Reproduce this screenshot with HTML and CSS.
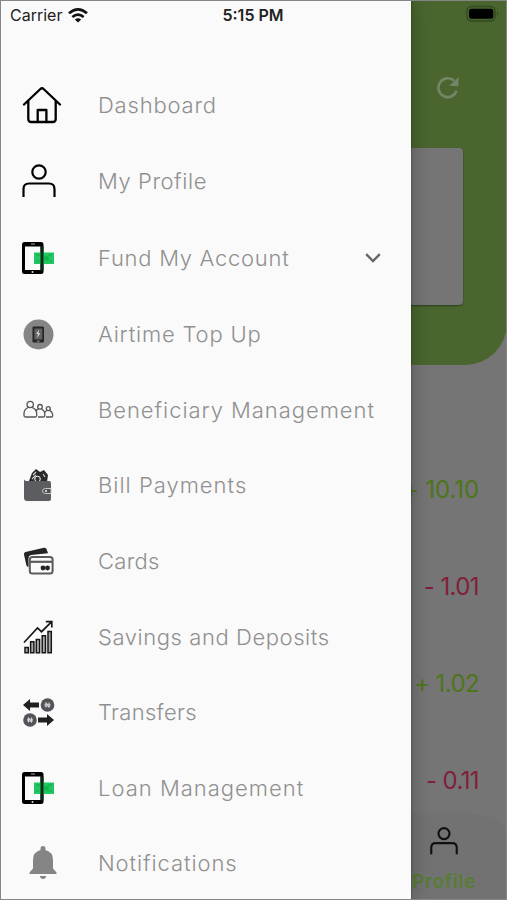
FILE: index.html
```
<!DOCTYPE html>
<html lang="en">
<head>
    <meta charset="UTF-8">
    <meta name="viewport" content="width=device-width, initial-scale=1.0">
    <title>Menu</title>
    <link rel="stylesheet" href="styles.css">
</head>
<body>
    <div class="screen">
        <main class="page">
            <header class="hero">
                <svg class="refresh" viewBox="0 0 24 24"><path d="M21.5 15.5A9.8 9.8 0 1 1 19 5" fill="none" stroke="currentColor" stroke-width="2.8"/><path d="M23.5 1v9.5H14z" fill="currentColor"/></svg>
                <div class="balance-card"></div>
            </header>
            <div class="amounts">
                <div class="amount credit ten">+ 10.10</div>
                <div class="amount debit">- 1.01</div>
                <div class="amount credit">+ 1.02</div>
                <div class="amount debit">- 0.11</div>
            </div>
            <footer class="tabbar">
                <svg width="28" height="28" viewBox="0 0 34 34" fill="none" stroke="#111" stroke-width="2.6"><circle cx="17" cy="8" r="6.7"/><path d="M1.5 33v-8q0-5.5 5.5-5.5h20q5.5 0 5.5 5.5v8"/></svg>
                <span>Profile</span>
            </footer>
        </main>

        <nav class="drawer">
            <a class="item dashboard">
                <svg width="40" height="38" viewBox="0 0 40 38" fill="none" stroke="#000" stroke-width="2.3" stroke-linecap="round" stroke-linejoin="round"><path d="M2 18.5 18.4 3q1.6-1.5 3.2 0L38 18.5M6.3 15v18q0 3 3 3h21.4q3 0 3-3V15"/><path d="M15.7 36V24h8.7v12"/></svg>
                <span>Dashboard</span>
            </a>
            <a class="item profile">
                <svg width="34" height="34" viewBox="0 0 34 34" fill="none" stroke="#000" stroke-width="2.2"><circle cx="17" cy="8" r="6.7"/><path d="M1.5 33v-8q0-5.5 5.5-5.5h20q5.5 0 5.5 5.5v8"/></svg>
                <span>My Profile</span>
            </a>
            <a class="item fund">
                <svg width="34" height="34" viewBox="0 0 34 34"><rect x="0" y="1" width="21.5" height="32" rx="2.5"/><path d="M3 5.5h15.5v23.5H3z" fill="#fafafa"/><path d="M12 11.5h20V23H12z" fill="#20c863"/><path d="M14 14h4m-4 6h3m9-6h4m-3 6h3" stroke="#13a84c"/><circle cx="24.5" cy="17.2" r="2.5" fill="#13b350"/><path d="M18.5 5.5h3v24h-3z" fill="#062b14"/><path d="M9 3h4" stroke="#aaa"/><circle cx="10.5" cy="31" r="1" fill="#ddd"/></svg>
                <span>Fund My Account</span>
                <svg class="chevron" width="16" height="10" viewBox="0 0 16 10"><path d="m1.2 1.2 6.8 6.8 6.8-6.8" fill="none" stroke="#666" stroke-width="2.4"/></svg>
            </a>
            <a class="item airtime">
                <svg width="31" height="31" viewBox="0 0 31 31"><circle cx="15.5" cy="15.5" r="15" fill="#858585"/><rect x="9.5" y="7.5" width="11.5" height="16" rx="1.2" fill="#252525"/><path d="M11.3 9.5h8v11h-8z" fill="#626262"/><path d="M16 10.5 13.2 15H15l-.8 4 3-4.8h-1.8z" fill="#ddd"/><path d="M14 22.3h2.5" stroke="#999"/></svg>
                <span>Airtime Top Up</span>
            </a>
            <a class="item beneficiary">
                <svg width="31" height="19" viewBox="0 0 31 19" fill="none" stroke="#555" stroke-width="1.3"><circle cx="7.2" cy="4.5" r="3.2"/><path d="M5.5 7.5Q1 9 1 14v1.5q0 1.5 1.5 1.5h9.7q1.5 0 1.5-1.5V14q0-5-4.7-6.5"/><circle cx="17" cy="6.8" r="2.3"/><path d="M15.5 9q-2.2.6-2.7 2.2M15 17h5.5q1.3 0 1.3-1.5v-1q0-4-3.3-5.3"/><circle cx="25.3" cy="8.6" r="2"/><path d="M24 10.5q-1.8.6-2.2 2M23 17h5.5q1.2 0 1.2-1.2 0-4-3-5.2"/></svg>
                <span>Beneficiary Management</span>
            </a>
            <a class="item bills">
                <svg width="30" height="34" viewBox="0 0 30 34"><path d="m6 13 3-8 4-4 4 3 4-2 4 5-1 7z" fill="#292929"/><path d="m10 7 3-3m-4 7 4-4m7-1 2 3" stroke="#ccc" stroke-width="1.2"/><circle cx="14.5" cy="11" r="2.8" fill="#333" stroke="#fafafa"/><path d="M1 11.5v18q0 3.5 3 3.5h22q2 0 2-2V15q0-2-2-2H4q-2 0-3-1.5z" fill="#5c5d60"/><path d="M28 20.5h-5.5q-3 0-3 2.5t3 2.5H28z" fill="#4b4c4f" stroke="#c9c9c9"/><circle cx="23" cy="23" r="1.2" fill="#ccc"/></svg>
                <span>Bill Payments</span>
            </a>
            <a class="item cards">
                <svg width="31" height="28" viewBox="0 0 31 28"><path d="M1 7.5Q.5 5.5 2.5 5L21 .7q2-.4 2.7 1.8L25 6.3 8 8q-2.5.4-2.5 3v9q-1.8-.2-2.2-2z" fill="#242424"/><rect x="6.8" y="10" width="22.8" height="16.5" rx="2.5" fill="#fafafa" stroke="#5b5b5b" stroke-width="2"/><path d="M7 14.8h22" stroke="#5b5b5b" stroke-width="2.2"/><circle cx="20" cy="21" r="2.4" fill="#222"/><circle cx="24.5" cy="21" r="2.4" fill="#222"/></svg>
                <span>Cards</span>
            </a>
            <a class="item savings">
                <svg width="31" height="34" viewBox="0 0 31 34" fill="#aaa" stroke="#171717" stroke-width="1.5"><path d="M2 27.5h3.3v5.2H2zM7.6 21.7h3.3v11H7.6zM13.3 19.5h3.3v13.2h-3.3zM19.2 15.8h3.3v16.9h-3.3zM25 11.5h3.3v21.2H25z"/><path d="M1 22.5 14.5 8l4 3.7L28 2.3M22.8 1.7h6v5.8" fill="none" stroke-width="1.7"/></svg>
                <span>Savings and Deposits</span>
            </a>
            <a class="item transfers">
                <svg width="32" height="30" viewBox="0 0 32 30"><path d="m0 8 7-6v3.5h9v5H7V14z" fill="#202020"/><circle cx="24.5" cy="8" r="6.8" fill="#535459"/><circle cx="7" cy="23" r="6.8" fill="#535459"/><path d="m31 23-7-6v3.5h-9v5h9V29z" fill="#202020"/><path d="M23 10.5V5.5l3 5v-5M21.5 7.3h6m-6 1.6h6M5.5 25.5v-5l3 5v-5M4 22.3h6m-6 1.6h6" fill="none" stroke="#ddd" stroke-width=".9"/></svg>
                <span>Transfers</span>
            </a>
            <a class="item loans">
                <svg width="34" height="34" viewBox="0 0 34 34"><rect x="0" y="1" width="21.5" height="32" rx="2.5"/><path d="M3 5.5h15.5v23.5H3z" fill="#fafafa"/><path d="M12 11.5h20V23H12z" fill="#20c863"/><path d="M14 14h4m-4 6h3m9-6h4m-3 6h3" stroke="#13a84c"/><circle cx="24.5" cy="17.2" r="2.5" fill="#13b350"/><path d="M18.5 5.5h3v24h-3z" fill="#062b14"/><path d="M9 3h4" stroke="#aaa"/><circle cx="10.5" cy="31" r="1" fill="#ddd"/></svg>
                <span>Loan Management</span>
            </a>
            <a class="item notifications">
                <svg width="28" height="34" viewBox="0 0 28 34" fill="#858585"><path d="M11.5 4V2.5a2.5 2.5 0 0 1 5 0V4Q24 6 24 14v8.5l3.5 4V28H.5v-1.5l3.5-4V14Q4 6 11.5 4zM10.8 30h6.4q-.6 3-3.2 3t-3.2-3z"/></svg>
                <span>Notifications</span>
            </a>
        </nav>

        <div class="statusbar">
            <span class="carrier">Carrier</span>
            <svg class="wifi" width="20" height="15" viewBox="0 0 20 15" fill="none" stroke="#111" stroke-width="2.6"><path d="M1 5.3q9-7.8 18 0M4.3 9q5.7-4.7 11.4 0"/><path d="M10 14.5 6.8 11.4q3.2-2.3 6.4 0z" fill="#111" stroke="none"/></svg>
            <span class="time">5:15 PM</span>
            <svg class="battery" width="34" height="18" viewBox="0 0 34 18"><rect x="1" y="1.5" width="28" height="14.5" rx="4.5" fill="none" stroke="#34491f" stroke-width="1.4"/><rect x="3" y="3.7" width="24.3" height="10" rx="2.5"/><path d="M31 6.5q2 2.2 0 4.4z" fill="#34491f"/></svg>
        </div>
    </div>
</body>
</html>
```
FILE: styles.css
```
* {
    box-sizing: border-box;
}
body {
    margin: 0;
    font-family: Inter, sans-serif;
}
.screen {
    position: relative;
    width: 507px;
    height: 900px;
    overflow: hidden;
    background-color: #757575;
}
/* window edge */
.screen::after {
    content: "";
    position: absolute;
    inset: 0;
    border: 1px solid #858585;
}
.page {
    height: 900px;
    display: flex;
    flex-direction: column;
}
.hero {
    height: 365px;
    padding: 76px 44px 0 0;
    display: flex;
    flex-direction: column;
    align-items: flex-end;
    background-color: #4a662e;
    border-bottom-right-radius: 42px;
}
.refresh {
    width: 23px;
    height: 23px;
    margin-right: 4px;
    color: #758568;
}
.balance-card {
    width: 420px;
    height: 157px;
    margin-top: 49px;
    background-color: #757575;
    border-radius: 4px;
    box-shadow: 0 1px 2px rgba(0, 0, 0, 0.4);
}
.amounts {
    padding: 76px 28px 0 0;
    text-align: right;
}
.amount {
    height: 97px;
    line-height: 97px;
    font-size: 24px;
    letter-spacing: -0.6px;
}
.ten {
    letter-spacing: -0.1px;
}
.credit {
    color: #4c7619;
}
.debit {
    color: #802039;
}
.tabbar {
    width: 240px;
    height: 87px;
    margin: -16px 0 0 auto;
    padding: 14px 31px 0 0;
    display: flex;
    flex-direction: column;
    align-items: flex-end;
    background-color: #727272;
    border-top-right-radius: 44px 22px;
    color: #567d31;
    font-size: 18.5px;
    font-weight: 600;
}
.tabbar svg {
    margin-right: 18px;
}
.tabbar span {
    margin-top: 15px;
    line-height: 22px;
    letter-spacing: 0.8px;
}
.drawer {
    position: absolute;
    top: 0;
    left: 0;
    width: 411px;
    height: 900px;
    padding-top: 67px;
    background-color: #fafafa;
    box-shadow: 0 0 20px rgba(0, 0, 0, 0.28), 0 0 2px rgba(0, 0, 0, 0.4);
}
.item {
    display: flex;
    align-items: center;
    height: 75.6px;
    padding-left: 23px;
    padding-bottom: 1px;
    color: #909090;
    font-size: 22px;
    font-weight: 300;
    letter-spacing: 0.8px;
}
.item > svg:first-child {
    flex-shrink: 0;
}
.item span {
    margin-left: auto;
    width: 313px;
    white-space: nowrap;
}
.dashboard, .profile {
    height: 76px;
}
.dashboard, .profile, .fund, .loans {
    padding-left: 22px;
}
.profile, .savings {
    letter-spacing: 0.57px;
}
.fund {
    height: 78px;
    letter-spacing: 0.72px;
}
.beneficiary, .bills, .loans {
    letter-spacing: 1px;
}
.beneficiary {
    letter-spacing: 0.95px;
}
.cards, .transfers {
    letter-spacing: 0.3px;
}
.notifications {
    padding-left: 29px;
    letter-spacing: 0.9px;
}
.item .chevron {
    margin-right: 30px;
}
.fund span {
    width: 267px;
}
.statusbar {
    position: absolute;
    top: 5px;
    left: 0;
    width: 507px;
    height: 20px;
    display: flex;
    align-items: center;
    padding: 0 7px 0 10px;
    color: #222;
    font-size: 16px;
}
.wifi {
    margin-left: 6px;
}
.time {
    margin-left: 134px;
    font-weight: 600;
}
.battery {
    margin-left: auto;
    margin-bottom: 2px;
}
```
